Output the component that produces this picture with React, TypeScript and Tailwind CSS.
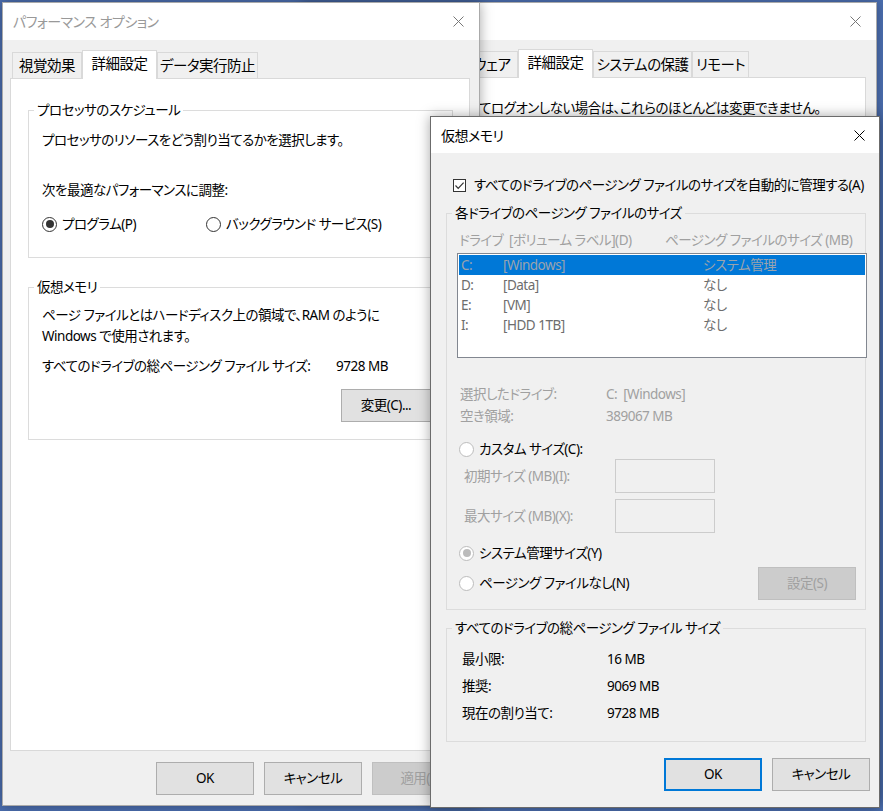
import React from 'react'

const FONT = "font-['Noto_Sans','Noto_Sans_CJK_JP',sans-serif] [font-feature-settings:'palt']"

function CloseX({ color }: { color: string }) {
  return (
    <svg width="11" height="11" viewBox="0 0 11 11" className="shrink-0">
      <path d="M0.5 0.5 L10.5 10.5 M10.5 0.5 L0.5 10.5" stroke={color} strokeWidth="1" fill="none" />
    </svg>
  )
}

function Radio({ checked = false, disabled = false }: { checked?: boolean; disabled?: boolean }) {
  return (
    <span
      className={`flex h-[15px] w-[15px] shrink-0 items-center justify-center rounded-full border bg-white ${
        disabled ? 'border-[#bcbcbc]' : 'border-[#333333]'
      }`}
    >
      {checked && <span className={`h-[8px] w-[8px] rounded-full ${disabled ? 'bg-[#bcbcbc]' : 'bg-[#333333]'}`} />}
    </span>
  )
}

function Checkbox() {
  return (
    <span className="flex h-[13px] w-[13px] shrink-0 items-center justify-center border border-[#333333] bg-white">
      <svg width="11" height="11" viewBox="0 0 11 11">
        <path d="M1.5 5.5 L4.2 8.3 L9.6 2.6" stroke="#333333" strokeWidth="1.2" fill="none" />
      </svg>
    </span>
  )
}

function Button({ label, className = '', disabled = false, focused = false }: { label: string; className?: string; disabled?: boolean; focused?: boolean }) {
  const look = disabled
    ? 'border border-[#bfbfbf] bg-[#cccccc] text-[#a0a0a0]'
    : focused
      ? 'border-2 border-[#0078d7] bg-[#e1e1e1]'
      : 'border border-[#adadad] bg-[#e1e1e1]'
  return <div className={`flex h-[33px] shrink-0 items-center justify-center ${look} ${className}`}>{label}</div>
}

function Tab({ label, selected = false, className = '' }: { label: string; selected?: boolean; className?: string }) {
  if (selected) {
    return (
      <div className={`relative z-10 -mb-px flex h-[29px] shrink-0 items-center justify-center border border-b-0 border-[#d9d9d9] bg-white pb-[2px] text-[14.5px] ${className}`}>
        {label}
      </div>
    )
  }
  return (
    <div className={`flex h-[26px] shrink-0 items-center justify-center border border-b-0 border-[#d9d9d9] bg-[#f0f0f0] text-[14.5px] ${className}`}>
      {label}
    </div>
  )
}

function Group({ title, children, className = '' }: { title: string; children: React.ReactNode; className?: string }) {
  return (
    <fieldset className={`min-w-0 border border-[#dcdcdc] ${className}`}>
      <legend className="ml-[5px] px-[3px] leading-[20px]">{title}</legend>
      {children}
    </fieldset>
  )
}

function SystemProperties() {
  return (
    <div className="absolute left-[301px] top-[2px] flex h-[800px] w-[576px] flex-col border border-[#aaaaaa] bg-[#f0f0f0] shadow-[0_0_10px_rgba(0,0,0,0.3)]">
      <div className="flex h-[37px] shrink-0 items-center justify-between bg-white pl-[10px] pr-[15px] text-[#999999]">
        <span>システムのプロパティ</span>
        <CloseX color="#777777" />
      </div>
      <div className="flex flex-col pl-[7px] pr-[10px] pt-[9px]">
        <div className="flex h-[28px] items-end pl-[2px]">
          <Tab label="コンピューター名" className="w-[117px]" />
          <Tab label="ハードウェア" className="w-[90px]" />
          <Tab label="詳細設定" selected className="w-[75px]" />
          <Tab label="システムの保護" className="w-[99px]" />
          <Tab label="リモート" className="w-[57px]" />
        </div>
        <div className="h-[680px] border border-[#d9d9d9] bg-white pl-[63px] pt-[20px]">
          <p className="whitespace-nowrap leading-[20px]">Administrator としてログオンしない場合は、これらのほとんどは変更できません。</p>
        </div>
      </div>
    </div>
  )
}

function PerformanceOptions() {
  return (
    <div className="absolute left-[2px] top-[2px] flex h-[804px] w-[478px] flex-col border border-[#aaaaaa] bg-[#f0f0f0] shadow-[0_0_12px_rgba(0,0,0,0.35)]">
      <div className="flex h-[37px] shrink-0 items-center justify-between bg-white pl-[10px] pr-[15px] text-[14px] text-[#999999]">
        <span>パフォーマンス オプション</span>
        <CloseX color="#777777" />
      </div>
      <div className="flex flex-col pl-[7px] pr-[9px] pt-[10px]">
        <div className="flex h-[28px] items-end pl-[2px]">
          <Tab label="視覚効果" className="w-[70px]" />
          <Tab label="詳細設定" selected className="w-[75px]" />
          <Tab label="データ実行防止" className="w-[101px]" />
        </div>
        <div className="h-[673px] border border-[#d9d9d9] bg-white pl-[17px] pr-[16px] pt-[21px]">
          <Group title="プロセッサのスケジュール">
            <div className="pb-[23px] pl-[13px]">
              <p className="mt-[10px] leading-[20px]">プロセッサのリソースをどう割り当てるかを選択します。</p>
              <p className="mt-[30px] leading-[20px]">次を最適なパフォーマンスに調整:</p>
              <div className="mt-[14px] flex h-[20px] items-center">
                <label className="flex w-[164px] items-center gap-[5px]">
                  <Radio checked />
                  <span>プログラム(P)</span>
                </label>
                <label className="flex items-center gap-[5px]">
                  <Radio />
                  <span>バックグラウンド サービス(S)</span>
                </label>
              </div>
            </div>
          </Group>
          <Group title="仮想メモリ" className="mt-[19px]">
            <div className="pb-[17px] pl-[13px] pr-[21px]">
              <p className="mt-[8px] leading-[21px]">
                ページ ファイルとはハードディスク上の領域で、RAM のように
                <br />
                Windows で使用されます。
              </p>
              <div className="mt-[9px] flex h-[20px] items-center whitespace-nowrap">
                <span className="w-[294px]">すべてのドライブの総ページング ファイル サイズ:</span>
                <span>9728 MB</span>
              </div>
              <div className="mt-[13px] flex justify-end">
                <Button label="変更(C)..." className="w-[90px]" />
              </div>
            </div>
          </Group>
        </div>
        <div className="mt-[11px] flex justify-end gap-[10px]">
          <Button label="OK" className="w-[98px]" />
          <Button label="キャンセル" className="w-[98px]" />
          <Button label="適用(A)" disabled className="w-[98px]" />
        </div>
      </div>
    </div>
  )
}

const drives = [
  { letter: 'C:', label: '[Windows]', size: 'システム管理' },
  { letter: 'D:', label: '[Data]', size: 'なし' },
  { letter: 'E:', label: '[VM]', size: 'なし' },
  { letter: 'I:', label: '[HDD 1TB]', size: 'なし' },
]

function VirtualMemory() {
  return (
    <div className="absolute left-[430px] top-[116px] flex h-[692px] w-[450px] flex-col border border-[#6b6b6b] bg-[#f0f0f0] shadow-[0_0_12px_rgba(0,0,0,0.35)]">
      <div className="flex h-[36px] shrink-0 items-center justify-between bg-white pl-[10px] pr-[14px] text-[14px]">
        <span>仮想メモリ</span>
        <CloseX color="#000000" />
      </div>
      <div className="pl-[15px] pr-[13px]">
        <label className="ml-[7px] mt-[22px] flex h-[20px] items-center gap-[8px] whitespace-nowrap">
          <Checkbox />
          <span>すべてのドライブのページング ファイルのサイズを自動的に管理する(A)</span>
        </label>
        <Group title="各ドライブのページング ファイルのサイズ" className="mt-[8px]">
          <div className="pb-[9px] pl-[12px] pr-[9px]">
            <div className="mt-[7px] flex h-[20px] items-center whitespace-pre text-[#a0a0a0]">
              <span className="w-[206px]">ドライブ  [ボリューム ラベル](D)</span>
              <span>ページング ファイルのサイズ (MB)</span>
            </div>
            <div className="-ml-[2px] mt-[3px] h-[105px] w-[410px] border border-[#828790] bg-white p-[1px]">
              {drives.map((d, i) => (
                <div
                  key={d.letter}
                  className={`flex h-[20px] items-center pl-[2px] ${i === 0 ? 'bg-[#0078d7] text-[#9aa3ad]' : 'text-[#6d6d6d]'}`}
                >
                  <span className="w-[42px]">{d.letter}</span>
                  <span className="w-[200px]">{d.label}</span>
                  <span>{d.size}</span>
                </div>
              ))}
            </div>
            <div className="mt-[25px] whitespace-pre leading-[22px] text-[#a0a0a0]">
              <div className="flex">
                <span className="w-[147px] pl-[1px]">選択したドライブ:</span>
                <span>C:  [Windows]</span>
              </div>
              <div className="flex">
                <span className="w-[147px] pl-[1px]">空き領域:</span>
                <span>389067 MB</span>
              </div>
            </div>
            <label className="mt-[12px] flex h-[20px] items-center gap-[5px]">
              <Radio disabled />
              <span>カスタム サイズ(C):</span>
            </label>
            <div className="flex h-[34px] items-center text-[#a0a0a0]">
              <span className="w-[156px] pl-[5px]">初期サイズ (MB)(I):</span>
              <div className="h-[34px] w-[100px] border border-[#cccccc] bg-[#f0f0f0]" />
            </div>
            <div className="mt-[6px] flex h-[34px] items-center text-[#a0a0a0]">
              <span className="w-[156px] pl-[5px]">最大サイズ (MB)(X):</span>
              <div className="h-[34px] w-[100px] border border-[#cccccc] bg-[#f0f0f0]" />
            </div>
            <label className="mt-[10px] flex h-[20px] items-center gap-[5px]">
              <Radio checked disabled />
              <span>システム管理サイズ(Y)</span>
            </label>
            <div className="mt-[4px] flex h-[33px] items-center justify-between">
              <label className="flex items-center gap-[5px]">
                <Radio disabled />
                <span>ページング ファイルなし(N)</span>
              </label>
              <Button label="設定(S)" disabled className="w-[98px]" />
            </div>
          </div>
        </Group>
        <Group title="すべてのドライブの総ページング ファイル サイズ" className="mt-[8px]">
          <div className="pb-[14px] pl-[15px] pt-[8px]">
            {[
              ['最小限:', '16 MB'],
              ['推奨:', '9069 MB'],
              ['現在の割り当て:', '9728 MB'],
            ].map(([k, v]) => (
              <div key={k} className="flex h-[27px] items-center">
                <span className="w-[145px]">{k}</span>
                <span>{v}</span>
              </div>
            ))}
          </div>
        </Group>
      </div>
      <div className="mt-[16px] flex justify-end gap-[10px] pr-[9px]">
        <Button label="OK" focused className="w-[98px]" />
        <Button label="キャンセル" className="w-[98px]" />
      </div>
    </div>
  )
}

export default function App() {
  return (
    <div className={`relative h-[811px] w-[883px] overflow-hidden bg-[#4b6eaf] text-[13.5px] tracking-[-0.5px] text-black ${FONT}`}>
      <SystemProperties />
      <PerformanceOptions />
      <VirtualMemory />
    </div>
  )
}
